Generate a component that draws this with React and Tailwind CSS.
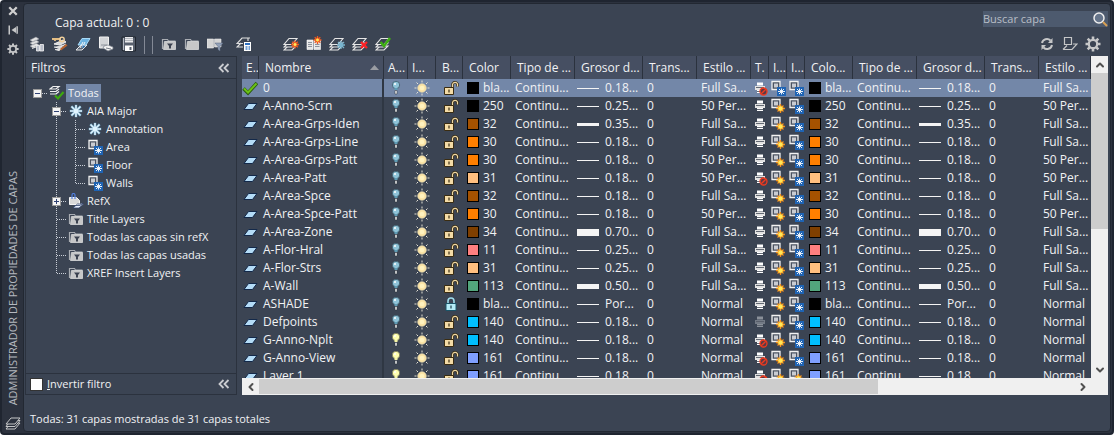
import { useState } from "react";
import { ChevronDown, ChevronLeft, ChevronRight, ChevronUp } from "lucide-react";

const LAYERS = [
  { name: "0", color: "#000000", label: "bla...", weight: "0.18...", style: "Full Sa...", plot: "no", vp: "snow", current: true },
  { name: "A-Anno-Scrn", color: "#000000", label: "250", weight: "0.25...", style: "50 Per..." },
  { name: "A-Area-Grps-Iden", color: "#a55200", label: "32", weight: "0.35...", line: "h-[3px]", style: "Full Sa..." },
  { name: "A-Area-Grps-Line", color: "#ff7f00", label: "30", weight: "0.18...", style: "Full Sa..." },
  { name: "A-Area-Grps-Patt", color: "#ff7f00", label: "30", weight: "0.18...", style: "50 Per..." },
  { name: "A-Area-Patt", color: "#ffbf7f", label: "31", weight: "0.18...", style: "50 Per...", plot: "no" },
  { name: "A-Area-Spce", color: "#a55200", label: "32", weight: "0.18...", style: "Full Sa..." },
  { name: "A-Area-Spce-Patt", color: "#ff7f00", label: "30", weight: "0.18...", style: "50 Per..." },
  { name: "A-Area-Zone", color: "#7f3f00", label: "34", weight: "0.70...", line: "h-[7px]", style: "Full Sa..." },
  { name: "A-Flor-Hral", color: "#ff7f7f", label: "11", weight: "0.25...", style: "Full Sa..." },
  { name: "A-Flor-Strs", color: "#ffbf7f", label: "31", weight: "0.25...", style: "Full Sa..." },
  { name: "A-Wall", color: "#52a57c", label: "113", weight: "0.50...", line: "h-[5px]", style: "Full Sa..." },
  { name: "ASHADE", color: "#000000", label: "bla...", weight: "Por...", style: "Normal", locked: true },
  { name: "Defpoints", color: "#00bfff", label: "140", weight: "0.18...", style: "Normal", plot: "off" },
  { name: "G-Anno-Nplt", color: "#00bfff", label: "140", weight: "0.18...", style: "Normal", plot: "no", on: true },
  { name: "G-Anno-View", color: "#7f9fff", label: "161", weight: "0.18...", style: "Normal", plot: "no", on: true },
  { name: "Layer 1", color: "#7f9fff", label: "161", weight: "0.18...", style: "Normal", plot: "no", on: true, vpNew: "sun" },
];

// guides: one cell per level. bar = vertical, tee = branch, end = last branch
const TREE = [
  { guides: ["minusRoot"], icon: "all", label: "Todas", selected: true },
  { guides: ["blank", "minus"], icon: "flake", label: "AIA Major" },
  { guides: ["blank", "bar", "tee"], icon: "flake", label: "Annotation" },
  { guides: ["blank", "bar", "tee"], icon: "vp", label: "Area" },
  { guides: ["blank", "bar", "tee"], icon: "vp", label: "Floor" },
  { guides: ["blank", "bar", "end"], icon: "vp", label: "Walls" },
  { guides: ["blank", "plus"], icon: "xref", label: "RefX" },
  { guides: ["blank", "tee"], icon: "folder", label: "Title Layers" },
  { guides: ["blank", "tee"], icon: "folder", label: "Todas las capas sin refX" },
  { guides: ["blank", "tee"], icon: "folder", label: "Todas las capas usadas" },
  { guides: ["blank", "end"], icon: "folder", label: "XREF Insert Layers" },
];

const Icon = ({ children, className = "size-4" }) => (
  <svg className={`block shrink-0 ${className}`} viewBox="0 0 16 16" fill="none" aria-hidden="true">
    {children}
  </svg>
);

/* ---------- small shared shapes ---------- */

const Sheets = () => (
  <g fill="#3c4452" stroke="#e6e6e6" strokeWidth="1.1">
    <path d="M1 14h8l4-4H5z" />
    <path d="M1 11h8l4-4H5z" />
    <path d="M1 8.500h8l5-6H6z" />
  </g>
);

const Spark = ({ x, y }) => (
  <g transform={`translate(${x} ${y})`}>
    <path d="M0-4v8M-4 0h8M-2.800-2.800l5.600 5.600M2.800-2.800l-5.600 5.600" stroke="#f0561c" strokeWidth="1.300" />
    <circle r="2" fill="#ffe85a" stroke="#f0561c" />
  </g>
);

const FlakeShape = ({ x, y, r, stroke, width }) => (
  <path
    transform={`translate(${x} ${y}) scale(${r})`}
    d="M0-1V1M-1 0H1M-.75-.75L.75 .75M.75-.75L-.75 .75"
    stroke={stroke}
    strokeWidth={width / r}
  />
);

/* ---------- toolbar icons ---------- */

const PropertyFilterIcon = () => (
  <Icon>
    <path d="M1 4l6-3 3 2-6 3zM1 7l6-3 3 2-6 3zM1 10l6-3 3 2-6 3z" fill="#e4e4e4" stroke="#8b8f98" strokeWidth=".5" />
    <path d="M3 12.500l4-1.500" stroke="#e4e4e4" />
    <path d="M7.500 9.500h3V15h-3zM11 8.500h3.500V15H11z" fill="#b9bec9" stroke="#f4f4f4" strokeWidth=".8" />
  </Icon>
);

const KeyFilterIcon = () => (
  <Icon>
    <path d="M2 8l6 1 6-3-3-2zM2 11l5 1 7-4M3 13.500l4 1 7-5" fill="#d9d9d9" stroke="#eee" />
    <path d="M0 3h8v3M3 3v2" stroke="#e3bd83" strokeWidth="1.800" />
    <circle cx="10" cy="3.500" r="2.200" stroke="#efcf9c" strokeWidth="1.500" />
    <path d="M8 13l6-5 1.500 1.500L9 14.500z" fill="#b5622e" />
  </Icon>
);

const StatesIcon = () => (
  <Icon>
    <path d="M1 14h6l5-5H6z" fill="#596474" stroke="#e8e8e8" />
    <path d="M3 9h8l4-6.500H7z" fill="#6db3e0" stroke="#a8daf7" />
    <path d="M5 12l3-6M10 6l-3 6" stroke="#f4f4f4" />
    <path d="M8 9l2 2-3 1z" fill="#2a74b8" />
  </Icon>
);

const SheetHandIcon = () => (
  <Icon>
    <path d="M1.500 1h9v11h-9z" fill="#d3d5d8" stroke="#f0f0f0" />
    <path d="M3 9h6" stroke="#8d929b" />
    <path d="M6 10l4-1 5 2v2l-5 2-5-3z" fill="#f2f2f2" stroke="#777d88" strokeWidth=".7" />
    <path d="M8 12l5 1" stroke="#777d88" />
  </Icon>
);

const SaveIcon = () => (
  <Icon>
    <path d="M1 1h13.500v14H2l-1-1z" fill="#59616f" stroke="#20262f" />
    <path d="M4 1h8v5.500H4z" fill="#e9eaec" />
    <path d="M4 2.500h8M4 4.500h8" stroke="#9da2ab" strokeWidth=".7" />
    <path d="M4 9.500h8V15H4z" fill="#fff" />
    <path d="M8.500 11h2v3h-2z" fill="#59616f" />
    <path d="M2.500 2v12" stroke="#b5bac3" />
  </Icon>
);

const FolderIcon = ({ filter }) => (
  <Icon>
    <path d="M1.500 13V3.500h5l1 1.500h7" stroke="#a9adb3" strokeWidth="1.200" />
    <path d="M3.500 5.500h11v8h-12z" fill="#c6c7c8" stroke="#d9dadb" strokeWidth=".8" />
    {filter && <path d="M6 7.500h6l-2 2.500v2.500H8V10z" fill="#3b4250" />}
  </Icon>
);

const BookFilterIcon = () => (
  <Icon>
    <path d="M0 3h6.500v9H0zM7.500 3H14v8H7.500z" fill="#d4d4d4" stroke="#ececec" strokeWidth=".6" />
    <path d="M8 7h8l-3 3.500V15l-2-1.500v-3z" fill="#93a1b8" stroke="#5c6a83" strokeWidth=".5" />
  </Icon>
);

const LayerStateIcon = () => (
  <Icon>
    <path d="M14 2H6L1 7.500h6M5 7L1 11h6M12 2v3" stroke="#dedede" strokeWidth="1.200" />
    <path d="M8 6h7v9H8z" fill="#fff" />
    <path d="M9 7h5v2H9z" fill="#2d6fc0" />
    <path d="M9.500 11h2M12.500 11h1.500M9.500 13h2M12.500 13h1.500" stroke="#4a84c9" strokeWidth="1.300" />
  </Icon>
);

const NewLayerIcon = () => (
  <Icon>
    <Sheets />
    <Spark x={12} y={8.5} />
  </Icon>
);

const NewFrozenIcon = () => (
  <Icon>
    <path d="M1 4h6v9.500H1zM8 4h6.500v9.500H8z" fill="#e6e6e6" stroke="#fff" strokeWidth=".6" />
    <path d="M2 6.500h4M2 8.500h4M2 10.500h4M9 8.500h4.500M9 10.500h4.500" stroke="#8c929c" />
    <Spark x={11.5} y={4} />
  </Icon>
);

const FrozenIcon = () => (
  <Icon>
    <Sheets />
    <FlakeShape x={12} y={9} r={4} stroke="#79b5cf" width={1.3} />
  </Icon>
);

const DeleteIcon = () => (
  <Icon>
    <Sheets />
    <path d="M9 6l6 6M15 6l-6 6" stroke="#fb1f24" strokeWidth="2.400" />
  </Icon>
);

const CurrentIcon = () => (
  <Icon>
    <Sheets />
    <path d="M5.500 6l3.500 4 6-8" stroke="#3cae12" strokeWidth="2.600" />
  </Icon>
);

const RefreshIcon = () => (
  <Icon>
    <path d="M3 7a5 5 0 0 1 8.500-2.500M13 9a5 5 0 0 1-8.500 2.500" stroke="#c6c7c8" strokeWidth="2" />
    <path d="M13.500 2v5H9zM2.500 14V9H7z" fill="#c6c7c8" />
  </Icon>
);

const OverrideIcon = () => (
  <Icon>
    <path d="M2.500 1.500h7v7h-7zM1 13.500h9l5-5.500h-4M1 13.500l4-4" stroke="#c6c7c8" strokeWidth="1.200" />
  </Icon>
);

const GearIcon = ({ small }) => (
  <Icon className={small ? "size-3" : "size-4"}>
    <circle cx="8" cy="8" r="4.200" stroke="#c6c7c8" strokeWidth="2.200" />
    <path
      d="M8 .5v3M8 12.500v3M.5 8h3M12.500 8h3M2.700 2.700l2.100 2.100M11.200 11.200l2.100 2.100M13.300 2.700l-2.100 2.100M4.800 11.200l-2.100 2.100"
      stroke="#c6c7c8"
      strokeWidth="2.600"
    />
  </Icon>
);

/* ---------- grid icons ---------- */

const StatusIcon = ({ current }) =>
  current ? (
    <Icon>
      <path d="M1.500 8.500l4.500 4.500L15 3" stroke="#2b5a10" strokeWidth="3.600" />
      <path d="M2 8.500l4 4L14.500 3.500" stroke="#6bc216" strokeWidth="2" />
    </Icon>
  ) : (
    <Icon>
      <path d="M2 11.500h8.500l4.500-6H6.500z" fill="#b4dcf7" stroke="#13294a" />
    </Icon>
  );

const BulbIcon = ({ on }) => (
  <Icon className="mx-auto size-4">
    <circle cx="8" cy="5" r="3.700" fill={on ? "#ffffb0" : "#8fc3d8"} stroke={on ? "#6d6d50" : "#35505f"} strokeWidth=".7" />
    <path d="M6.500 8h3v2h-3z" fill={on ? "#f5f5a4" : "#5e9cb5"} />
    <path d="M7 10.500h2V14H7z" fill="#f4f4f4" stroke="#2a303b" strokeWidth=".5" />
    <circle cx="7" cy="4" r="1" fill="#fff" />
  </Icon>
);

const SunIcon = () => (
  <Icon className="mx-auto size-4">
    <path d="M8 .5v2M8 13.500v2M.5 8h2M13.500 8h2M2.500 2.500l1.500 1.500M12 12l1.500 1.500M13.500 2.500L12 4M4 12l-1.500 1.500" stroke="#e4e0d4" />
    <circle cx="8" cy="8" r="4.300" fill="#fbe3a4" stroke="#d9cfae" strokeWidth=".7" />
    <circle cx="8" cy="8" r="2.300" fill="#fff2bf" />
  </Icon>
);

const LockIcon = ({ locked }) =>
  locked ? (
    <Icon className="mx-auto size-4">
      <path d="M5 8V5a3 3 0 0 1 6 0v3" stroke="#9fdcec" strokeWidth="1.600" />
      <path d="M3 7.500h10v7H3z" fill="#b5ecf7" stroke="#1b5468" />
      <path d="M8 9.500v3" stroke="#1b3c48" strokeWidth="1.200" />
    </Icon>
  ) : (
    <Icon className="mx-auto size-4">
      <path d="M9.500 8V4.500A2.600 2.600 0 0 1 14.500 4v2.500" stroke="#3a2c12" strokeWidth="2.600" />
      <path d="M9.500 8V4.500A2.600 2.600 0 0 1 14.500 4v2.500" stroke="#f0d9a4" strokeWidth="1.200" />
      <path d="M1.500 7.500h9v7h-9z" fill="#f3dba6" stroke="#3a2c12" />
      <path d="M6 9.500v3" stroke="#3a2c12" strokeWidth="1.200" />
    </Icon>
  );

const PlotIcon = ({ mode }) => {
  const paper = mode === "off" ? "#8a9099" : "#ffffff";
  return (
    <Icon className="mx-auto size-4">
      <path d="M5 2.500h6v3H5zM5 10h6v3H5z" fill={paper} />
      <path d="M3 6h10v4H3z" fill={mode === "off" ? "#737a85" : "#e2e2e2"} />
      <path d="M4 7.500h8M5 11.500h6" stroke="#565c68" strokeWidth=".9" />
      {mode === "no" && (
        <>
          <circle cx="11.500" cy="11.500" r="3.500" fill="#5b3a44" stroke="#f03a1e" strokeWidth="1.300" />
          <path d="M9.200 13.800l4.600-4.600" stroke="#f03a1e" strokeWidth="1.300" />
        </>
      )}
    </Icon>
  );
};

const ViewportIcon = ({ kind }) => (
  <Icon className="mx-auto size-4">
    <path d="M2 1.500h8v8H2z" fill="#4b5361" stroke="#f2f2f2" strokeWidth="1.300" />
    <path d="M4 3.500h4v4H4z" fill="#c9ccd2" />
    {kind === "sun" ? (
      <>
        <path d="M10.500 6v9M6 10.500h9M7.500 7.500l6 6M13.500 7.500l-6 6" stroke="#f58a1a" strokeWidth="1.300" />
        <circle cx="10.500" cy="10.500" r="2.600" fill="#ffe95c" stroke="#f9a825" />
      </>
    ) : (
      <>
        <path d="M7 7h9v9H7z" fill="#1f64b4" />
        <path d="M11.500 8.500v6M8 11.500h7M9 9l5 5M14 9l-5 5" stroke="#ffffff" strokeWidth=".9" />
      </>
    )}
  </Icon>
);

/* ---------- filter tree ---------- */

const TreeIcon = ({ kind }) => {
  if (kind === "folder") return <FolderIcon filter />;
  if (kind === "vp") return <ViewportIcon kind="snow" />;
  if (kind === "flake") {
    return (
      <Icon>
        <FlakeShape x={8} y={8} r={6.3} stroke="#5f93b3" width={2.6} />
        <FlakeShape x={8} y={8} r={6} stroke="#dff4ff" width={1.6} />
      </Icon>
    );
  }
  if (kind === "xref") {
    return (
      <Icon>
        <path d="M1.500 4.500h7l3 3v4h-10z" fill="#dadada" stroke="#f4f4f4" />
        <path d="M4 6V2a1.500 1.500 0 0 1 3 0v4" stroke="#4f7fe0" strokeWidth="1.200" />
        <path d="M5 15h6l4.500-4H9.500zM6 12.500h6l3-2.500" fill="#e9f1ff" stroke="#32456b" strokeWidth=".8" />
      </Icon>
    );
  }
  return (
    <Icon>
      <path d="M1 4l3-2.500h6L7 4zM1 6.500h6L10 4M1 9h6l3-2.500" stroke="#f0f0f0" strokeWidth="1.200" />
      <path d="M6 10.500l3 3L14.500 7" stroke="#3ea80f" strokeWidth="2.200" />
    </Icon>
  );
};

const GUIDE_LINES = {
  bar: "M9.500 0v18",
  tee: "M9.500 0v18M10 9.500h9",
  end: "M9.500 0v10M10 9.500h9",
  minus: "M9.500 0v18M14 9.500h5",
  plus: "M9.500 0v18M14 9.500h5",
  minusRoot: "M14 9.500h5",
};

const Guide = ({ kind }) => {
  const box = kind === "minus" || kind === "minusRoot" || kind === "plus";
  const art = (
    <svg className="block h-[18px] w-[19px] shrink-0" viewBox="0 0 19 18" fill="none" shapeRendering="crispEdges" aria-hidden="true">
      {GUIDE_LINES[kind] && <path d={GUIDE_LINES[kind]} stroke="#c9ced6" strokeDasharray="1 1" />}
      {box && <path d="M5.500 5.500h8v8h-8z" fill="#f4f4f4" stroke="#9a9a9a" />}
      {box && <path d={kind === "plus" ? "M7 9.500h5M9.500 7v5" : "M7 9.500h5"} stroke="#2f4173" />}
    </svg>
  );
  return box ? <button type="button" aria-label="Expandir o contraer">{art}</button> : art;
};

const DoubleChevron = () => (
  <svg className="block h-3 w-3" viewBox="0 0 12 12" fill="none" stroke="#c9cbcf" strokeWidth="1.800" aria-hidden="true">
    <path d="M5.500 2l-4 4 4 4M10.500 2l-4 4 4 4" />
  </svg>
);

const FilterPanel = ({ inverted, onInvert }) => (
  <aside className="flex w-[212px] shrink-0 flex-col border border-[#2b323e]">
    <div className="flex h-[22px] shrink-0 items-center justify-between border-b border-[#2b323e] pr-1.5 pl-[5px]">
      <h2>Filtros</h2>
      <button type="button" aria-label="Contraer filtros"><DoubleChevron /></button>
    </div>
    <ul className="min-h-0 flex-1 overflow-hidden pt-[5px] pl-0.5 text-[11px]">
      {TREE.map((node) => (
        <li key={node.label} className="flex h-[18px] items-center">
          {node.guides.map((g, i) => <Guide key={i} kind={g} />)}
          <span className="flex w-[19px] shrink-0 justify-center"><TreeIcon kind={node.icon} /></span>
          <span className={`px-0.5 leading-[18px] whitespace-nowrap ${node.selected ? "bg-[#7387a8]" : ""}`}>{node.label}</span>
        </li>
      ))}
    </ul>
    <div className="flex h-[21px] shrink-0 items-center justify-between border-t border-[#2b323e] pr-1.5 pl-1">
      <label className="flex items-center gap-1 text-[11px]">
        <input
          type="checkbox"
          checked={inverted}
          onChange={onInvert}
          className="size-[13px] appearance-none border border-[#333] bg-white checked:bg-[#2d6fc0]"
        />
        <span><span className="underline">I</span>nvertir filtro</span>
      </label>
      <button type="button" aria-label="Contraer"><DoubleChevron /></button>
    </div>
  </aside>
);

/* ---------- layer grid ---------- */

const SwatchCell = ({ layer }) => (
  <td className="pl-1">
    <span className="flex items-center gap-1">
      <span className="size-3 shrink-0 border border-black" style={{ backgroundColor: layer.color }} />
      {layer.label}
    </span>
  </td>
);

const WeightCell = ({ layer }) => (
  <td className="pl-0.5">
    <span className="flex items-center gap-1.5">
      <span className={`w-[22px] shrink-0 bg-[#f4f4f4] ${layer.line ?? "h-px"}`} />
      {layer.weight}
    </span>
  </td>
);

const LayerRow = ({ layer }) => (
  <tr className={`h-[18px] ${layer.current ? "bg-[#7387a8]" : ""}`}>
    <td><StatusIcon current={layer.current} /></td>
    <td className="border-r-2 border-[#2f3743] pl-1">{layer.name}</td>
    <td><BulbIcon on={layer.on} /></td>
    <td><SunIcon /></td>
    <td className="pl-0.5"><LockIcon locked={layer.locked} /></td>
    <SwatchCell layer={layer} />
    <td className="pl-1">Continu...</td>
    <WeightCell layer={layer} />
    <td className="pl-1">0</td>
    <td className="pl-1">{layer.style}</td>
    <td><PlotIcon mode={layer.plot} /></td>
    <td><ViewportIcon kind={layer.vp ?? "sun"} /></td>
    <td><ViewportIcon kind={layer.vpNew ?? "snow"} /></td>
    <SwatchCell layer={layer} />
    <td className="pl-1">Continu...</td>
    <WeightCell layer={layer} />
    <td className="pl-1">0</td>
    <td className="pl-1">{layer.style}</td>
  </tr>
);

const HEADERS = [
  ["E..", "w-[17px] pl-1"],
  ["Nombre", "w-[125px] pl-1.5"],
  ["A...", "w-6 pl-1"],
  ["I...", "w-7 pl-1"],
  ["B...", "w-[27px] pl-1.5"],
  ["Color", "w-12 pl-1.5"],
  ["Tipo de ...", "w-16 pl-1.5"],
  ["Grosor d...", "w-[68px] pl-1.5"],
  ["Trans...", "w-[54px] pl-1.5"],
  ["Estilo ...", "w-[54px] pl-1.5"],
  ["T.", "w-[18px] pl-1"],
  ["I...", "w-[18px] pl-1"],
  ["I...", "w-[18px] pl-1"],
  ["Colo...", "w-12 pl-1.5"],
  ["Tipo de ...", "w-16 pl-1.5"],
  ["Grosor d...", "w-[68px] pl-1.5"],
  ["Trans...", "w-[54px] pl-1.5"],
  ["Estilo ...", "pl-1.5"],
];

const LayerTable = () => (
  <table className="w-full table-fixed border-separate border-spacing-0 [&_td]:overflow-hidden [&_td]:leading-[18px] [&_td]:whitespace-nowrap">
    <thead>
      <tr className="h-[23px] bg-[#464f62]">
        {HEADERS.map(([label, cls], i) => (
          <th key={i} className={`overflow-hidden border-r border-[#2b323e] text-left font-normal whitespace-nowrap ${cls}`}>
            {label === "Nombre" ? (
              <span className="flex items-center justify-between pr-1">
                {label}
                <svg className="h-[5px] w-[9px]" viewBox="0 0 9 5" aria-hidden="true"><path d="M0 5h9L4.500 0z" fill="#9a9da3" /></svg>
              </span>
            ) : label}
          </th>
        ))}
      </tr>
    </thead>
    <tbody>
      {LAYERS.map((layer) => <LayerRow key={layer.name} layer={layer} />)}
    </tbody>
  </table>
);

const ScrollButton = ({ icon: Arrow, label }) => (
  <button type="button" aria-label={label} className="flex size-[17px] shrink-0 items-center justify-center">
    <Arrow className="size-3 text-[#505050]" strokeWidth={4} />
  </button>
);

const LayerGrid = () => (
  <section className="flex min-w-0 flex-1 flex-col">
    <div className="flex min-h-0 flex-1">
      <div className="min-w-0 flex-1 overflow-hidden"><LayerTable /></div>
      <div className="flex w-[17px] shrink-0 flex-col bg-[#f0f0f0]">
        <ScrollButton icon={ChevronUp} label="Subir" />
        <div className="flex-1"><div className="h-[54%] bg-[#cdcdcd]" /></div>
        <ScrollButton icon={ChevronDown} label="Bajar" />
      </div>
    </div>
    <div className="flex h-[17px] shrink-0 bg-[#f0f0f0] pr-[17px]">
      <ScrollButton icon={ChevronLeft} label="Izquierda" />
      <div className="flex flex-1 py-px"><div className="w-[76%] bg-[#cdcdcd]" /></div>
      <ScrollButton icon={ChevronRight} label="Derecha" />
    </div>
  </section>
);

/* ---------- toolbar ---------- */

const ToolButton = ({ label, children }) => (
  <button type="button" aria-label={label} className="flex w-[23px] shrink-0 justify-center">{children}</button>
);

const Divider = () => <span className="h-[18px] w-px shrink-0 bg-[#838995]" />;

const Toolbar = () => (
  <div className="flex h-5 shrink-0 items-start">
    <ToolButton label="Filtro de propiedades"><PropertyFilterIcon /></ToolButton>
    <ToolButton label="Bloquear"><KeyFilterIcon /></ToolButton>
    <ToolButton label="Estados"><StatesIcon /></ToolButton>
    <ToolButton label="Aislar"><SheetHandIcon /></ToolButton>
    <ToolButton label="Guardar"><SaveIcon /></ToolButton>
    <div className="flex gap-[7px] px-1"><Divider /><Divider /></div>
    <ToolButton label="Nuevo filtro"><FolderIcon filter /></ToolButton>
    <ToolButton label="Nuevo grupo"><FolderIcon /></ToolButton>
    <ToolButton label="Conciliar"><BookFilterIcon /></ToolButton>
    <div className="px-[3px]"><Divider /></div>
    <ToolButton label="Estados de capa"><LayerStateIcon /></ToolButton>
    <div className="flex pl-6">
      <ToolButton label="Nueva capa"><NewLayerIcon /></ToolButton>
      <ToolButton label="Nueva capa inutilizada"><NewFrozenIcon /></ToolButton>
      <ToolButton label="Inutilizar"><FrozenIcon /></ToolButton>
      <ToolButton label="Suprimir"><DeleteIcon /></ToolButton>
      <ToolButton label="Definir actual"><CurrentIcon /></ToolButton>
    </div>
    <div className="ml-auto flex pr-1">
      <ToolButton label="Actualizar"><RefreshIcon /></ToolButton>
      <ToolButton label="Modificaciones"><OverrideIcon /></ToolButton>
      <ToolButton label="Parámetros"><GearIcon /></ToolButton>
    </div>
  </div>
);

const SideBar = () => (
  <div className="flex w-[21px] shrink-0 flex-col items-center pt-[3px] pb-0.5">
    <div className="flex flex-col gap-[7px]">
      <button type="button" aria-label="Cerrar">
        <Icon className="size-3"><path d="M3 3l10 10M13 3L3 13" stroke="#d0d0d0" strokeWidth="3" /></Icon>
      </button>
      <button type="button" aria-label="Ocultar automáticamente">
        <Icon className="size-3"><path d="M3 2v12M13.500 3v10" stroke="#c6c7c8" strokeWidth="2" /><path d="M12 4v8L6 8z" fill="#c6c7c8" /></Icon>
      </button>
      <button type="button" aria-label="Propiedades"><GearIcon small /></button>
    </div>
    <h1 className="mt-auto rotate-180 text-[11px] leading-4 whitespace-nowrap text-[#b4b8bf] [writing-mode:vertical-rl]">
      ADMINISTRADOR DE PROPIEDADES DE CAPAS
    </h1>
    <svg className="mt-2.5 block size-4 shrink-0" viewBox="0 0 16 16" fill="#2b313d" stroke="#c6c7c8" aria-hidden="true">
      <path d="M1 14h9l5-6H6z" />
      <path d="M1 11.500h9l5-6H6z" />
      <path d="M1 9h9l5-6H6z" />
    </svg>
  </div>
);

export default function App() {
  const [inverted, setInverted] = useState(false);
  const [query, setQuery] = useState("");

  return (
    <div className="flex h-screen overflow-hidden rounded-sm border-2 border-[#1f2530] bg-[#2c323e] font-['Open_Sans','Noto_Sans',sans-serif] text-[12px] leading-4 text-[#f1f2f4]">
      <SideBar />
      <main className="mt-px mr-px mb-px flex min-w-0 flex-1 flex-col rounded-sm border border-[#222832] bg-[#3b4453] pr-0.5 pl-px">
        <header className="flex h-8 shrink-0 items-start justify-between pt-[7px] pl-[30px]">
          <p className="pt-1">Capa actual: 0 : 0</p>
          <div className="flex h-4 w-[125px] items-center bg-[#4d5a6e]">
            <input
              type="text"
              aria-label="Buscar capa"
              placeholder="Buscar capa"
              value={query}
              onChange={(e) => setQuery(e.target.value)}
              className="min-w-0 flex-1 bg-transparent text-[11px] outline-none placeholder:text-[#b9bec6]"
            />
            <Icon>
              <circle cx="7" cy="7" r="5" fill="#66758b" stroke="#eeeeee" strokeWidth="1.500" />
              <path d="M11 11l4 4" stroke="#d9a052" strokeWidth="2" />
            </Icon>
          </div>
        </header>
        <Toolbar />
        <div className="flex min-h-0 flex-1 gap-[5px]">
          <FilterPanel inverted={inverted} onInvert={(e) => setInverted(e.target.checked)} />
          <LayerGrid />
        </div>
        <footer className="h-9 shrink-0 pt-4 pl-[5px] text-[11px]">Todas: 31 capas mostradas de 31 capas totales</footer>
      </main>
    </div>
  );
}
